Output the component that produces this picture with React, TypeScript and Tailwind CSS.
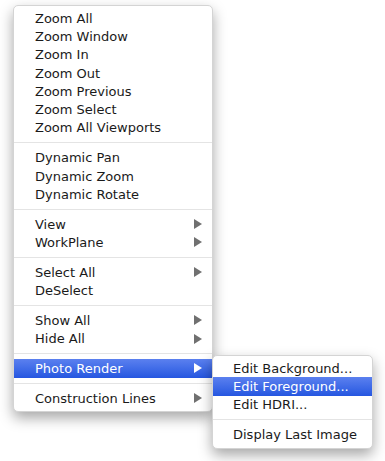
import React from 'react';

type Entry = { label: string; arrow?: boolean; active?: boolean } | 'sep';

const mainItems: Entry[] = [
  { label: 'Zoom All' },
  { label: 'Zoom Window' },
  { label: 'Zoom In' },
  { label: 'Zoom Out' },
  { label: 'Zoom Previous' },
  { label: 'Zoom Select' },
  { label: 'Zoom All Viewports' },
  'sep',
  { label: 'Dynamic Pan' },
  { label: 'Dynamic Zoom' },
  { label: 'Dynamic Rotate' },
  'sep',
  { label: 'View', arrow: true },
  { label: 'WorkPlane', arrow: true },
  'sep',
  { label: 'Select All', arrow: true },
  { label: 'DeSelect' },
  'sep',
  { label: 'Show All', arrow: true },
  { label: 'Hide All', arrow: true },
  'sep',
  { label: 'Photo Render', arrow: true, active: true },
  'sep',
  { label: 'Construction Lines', arrow: true },
];

const subItems: Entry[] = [
  { label: 'Edit Background...' },
  { label: 'Edit Foreground...', active: true },
  { label: 'Edit HDRI...' },
  'sep',
  { label: 'Display Last Image' },
];

const Arrow = ({ active }: { active?: boolean }) => (
  <svg width="8" height="10" viewBox="0 0 8 10" className="shrink-0">
    <path d="M0 0 L8 5 L0 10 Z" fill={active ? '#ffffff' : '#707070'} />
  </svg>
);

const MenuList = ({ items, indent }: { items: Entry[]; indent: string }) => (
  <div className="flex flex-col pt-[3px] pb-[4px]">
    {items.map((item, i) =>
      item === 'sep' ? (
        <div key={i} className="h-[11.5px] flex items-center">
          <div className="h-px w-full bg-[#e4e4e4]" />
        </div>
      ) : (
        <div
          key={i}
          className={`h-[18.3px] flex items-center justify-between ${indent} pr-[10px] ${
            item.active
              ? 'bg-gradient-to-b from-[#5b80ef] to-[#2556e0] text-white'
              : 'text-[#1a1a1a]'
          }`}
        >
          <span>{item.label}</span>
          {item.arrow && <Arrow active={item.active} />}
        </div>
      )
    )}
  </div>
);

const App = () => {
  return (
    <div
      className="relative w-[385px] h-[461px] bg-white overflow-hidden text-[13px] leading-none"
      style={{ fontFamily: '"DejaVu Sans", Verdana, sans-serif' }}
    >
      <div className="ml-[13px] mt-[5px] w-[200px] bg-white rounded-[5px] border border-[#d4d4d4] shadow-[0_6px_14px_rgba(0,0,0,0.35)]">
        <MenuList items={mainItems} indent="pl-[21px]" />
      </div>

      <div className="absolute left-[212px] top-[355px] w-[161px] bg-white rounded-[5px] border border-[#d4d4d4] shadow-[0_6px_14px_rgba(0,0,0,0.35)]">
        <MenuList items={subItems} indent="pl-[20px]" />
      </div>
    </div>
  );
};

export default App;
